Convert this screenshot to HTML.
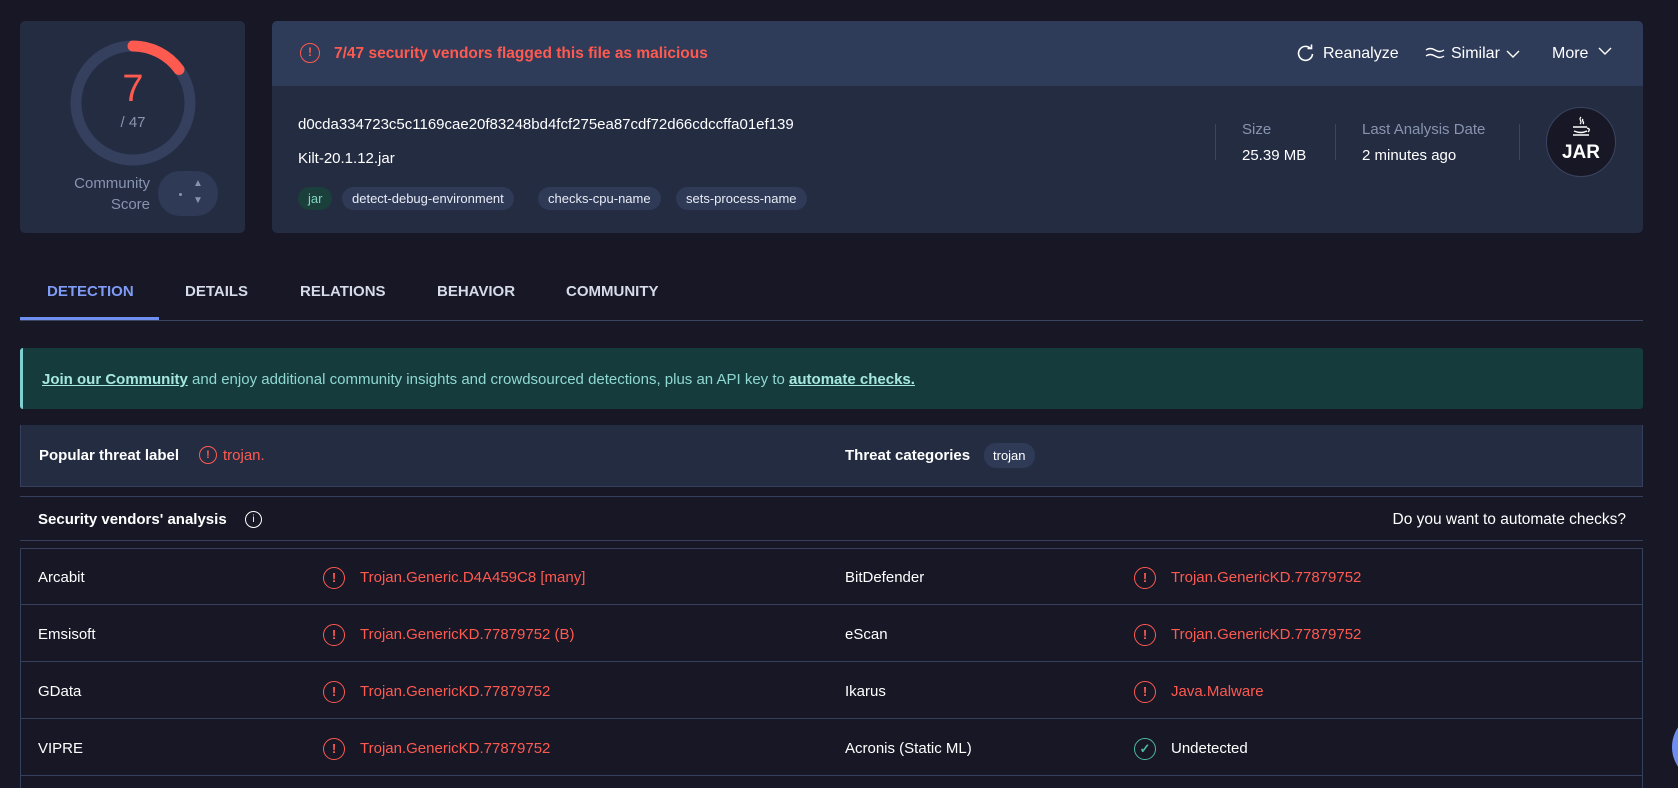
<!DOCTYPE html>
<html><head><meta charset="utf-8"><style>
*{box-sizing:border-box;margin:0;padding:0}
body{width:1678px;height:780px;overflow:hidden;background:#171726;font-family:"Liberation Sans",sans-serif;color:#fff;position:relative}
.abs{position:absolute}
.red{color:#ff5a50}
.muted{color:#8893b0}
.tag{position:absolute;top:187px;height:23px;line-height:23px;border-radius:12px;background:#2f3a57;font-size:13px;padding:0 10px;color:#e8ecf5}
.tab{position:absolute;top:283px;font-size:15px;font-weight:bold;color:#d5dbe8}
.row{position:absolute;left:20px;width:1623px;height:57px;border-bottom:1px solid #35405c}
.row span{position:absolute;top:1px;line-height:57px;font-size:15px}
.ic{position:absolute;top:19px;width:22px;height:22px;border:1.6px solid #ff5a50;border-radius:50%;color:#ff5a50;font-size:13px;text-align:center;line-height:19px;font-weight:bold}
</style></head><body>

<!-- score card -->
<div class="abs" style="left:20px;top:21px;width:225px;height:212px;background:#242c42;border-radius:5px"></div>
<svg class="abs" style="left:67px;top:37px" width="132" height="132" viewBox="0 0 132 132">
<circle cx="66" cy="66" r="57" fill="none" stroke="#34405e" stroke-width="11"/>
<path d="M66 9 A57 57 0 0 1 112 32.5" fill="none" stroke="#ff5a50" stroke-width="11" stroke-linecap="round"/>
</svg>
<div class="abs red" style="left:103px;top:68px;width:60px;text-align:center;font-size:38px">7</div>
<div class="abs muted" style="left:103px;top:114px;width:60px;text-align:center;font-size:15px">/ 47</div>
<div class="abs muted" style="left:40px;top:173px;width:110px;text-align:right;font-size:15px;line-height:21px">Community<br>Score</div>
<div class="abs" style="left:158px;top:171px;width:60px;height:45px;border-radius:22px;background:#2f3a57"></div>
<div class="abs" style="left:179px;top:193px;width:3px;height:3px;border-radius:50%;background:#8893b0"></div>
<div class="abs muted" style="left:193px;top:175px;font-size:10px;line-height:17px">▲<br>▼</div>

<!-- main panel -->
<div class="abs" style="left:272px;top:21px;width:1371px;height:212px;background:#242c42;border-radius:5px;overflow:hidden">
<div style="height:65px;background:#2e3b59"></div>
</div>
<div class="abs" style="left:300px;top:43px;width:20px;height:20px;border:1.6px solid #ff5a50;border-radius:50%;color:#ff5a50;font-size:12px;text-align:center;line-height:17px;font-weight:bold">!</div>
<div class="abs red" style="left:334px;top:45px;font-size:15.5px;font-weight:bold">7/47 security vendors flagged this file as malicious</div>

<svg class="abs" style="left:1297px;top:44px" width="18" height="18" viewBox="0 0 18 18"><path d="M14 5 A7 7 0 1 0 15.5 10" fill="none" stroke="#fff" stroke-width="1.6"/><path d="M10.5 4.5 L14.5 4.5 L14.5 0.5" fill="none" stroke="#fff" stroke-width="1.6"/></svg>
<div class="abs" style="left:1323px;top:45px;font-size:16px">Reanalyze</div>
<svg class="abs" style="left:1425px;top:46px" width="20" height="14" viewBox="0 0 20 14"><path d="M1 4 Q5 1 10 4 T19 4 M1 10 Q5 7 10 10 T19 10" fill="none" stroke="#fff" stroke-width="1.4"/></svg>
<div class="abs" style="left:1451px;top:45px;font-size:16px">Similar</div>
<svg class="abs" style="left:1506px;top:50px" width="14" height="9" viewBox="0 0 14 9"><path d="M1 1 L7 7 L13 1" fill="none" stroke="#fff" stroke-width="1.4"/></svg>
<div class="abs" style="left:1552px;top:45px;font-size:16px">More</div>
<svg class="abs" style="left:1598px;top:47px" width="14" height="9" viewBox="0 0 14 9"><path d="M1 1 L7 7 L13 1" fill="none" stroke="#fff" stroke-width="1.4"/></svg>

<div class="abs" style="left:298px;top:116px;font-size:15px">d0cda334723c5c1169cae20f83248bd4fcf275ea87cdf72d66cdccffa01ef139</div>
<div class="abs" style="left:298px;top:150px;font-size:15px">Kilt-20.1.12.jar</div>
<div class="tag" style="left:298px;background:#1b3f3a;color:#7fd4c4">jar</div>
<div class="tag" style="left:342px">detect-debug-environment</div>
<div class="tag" style="left:538px">checks-cpu-name</div>
<div class="tag" style="left:676px">sets-process-name</div>

<div class="abs" style="left:1215px;top:124px;width:1px;height:36px;background:#3a4560"></div>
<div class="abs muted" style="left:1242px;top:121px;font-size:15px">Size</div>
<div class="abs" style="left:1242px;top:147px;font-size:15px">25.39 MB</div>
<div class="abs" style="left:1335px;top:124px;width:1px;height:36px;background:#3a4560"></div>
<div class="abs muted" style="left:1362px;top:121px;font-size:15px">Last Analysis Date</div>
<div class="abs" style="left:1362px;top:147px;font-size:15px">2 minutes ago</div>
<div class="abs" style="left:1519px;top:124px;width:1px;height:36px;background:#3a4560"></div>
<div class="abs" style="left:1546px;top:107px;width:70px;height:70px;border-radius:50%;background:#171726;border:1px solid #3a4560"></div>
<svg class="abs" style="left:1568px;top:115px" width="26" height="26" viewBox="0 0 26 26"><path d="M13 2 C10 5 15 6 12 9 M15 4 C13 6 17 7 15 9" fill="none" stroke="#fff" stroke-width="1.3"/><path d="M5 12 H19 M6 16 Q13 19 19 16 M5 20 H21 M19 13 Q23 14 20 17" fill="none" stroke="#fff" stroke-width="1.4"/></svg>
<div class="abs" style="left:1546px;top:142px;width:70px;text-align:center;font-size:19px;font-weight:bold">JAR</div>

<!-- tabs -->
<div class="tab" style="left:47px;color:#7f9cf5">DETECTION</div>
<div class="tab" style="left:185px">DETAILS</div>
<div class="tab" style="left:300px">RELATIONS</div>
<div class="tab" style="left:437px">BEHAVIOR</div>
<div class="tab" style="left:566px">COMMUNITY</div>
<div class="abs" style="left:20px;top:320px;width:1623px;height:1px;background:#3a4560"></div>
<div class="abs" style="left:20px;top:317px;width:139px;height:3px;background:#6f8ff0"></div>

<!-- banner -->
<div class="abs" style="left:20px;top:348px;width:1623px;height:61px;background:#163b3d;border-left:3px solid #7fd0d0;border-radius:3px"></div>
<div class="abs" style="left:42px;top:371px;font-size:15px;color:#8fd8d0"><b style="text-decoration:underline;color:#a6e8e0">Join our Community</b> and enjoy additional community insights and crowdsourced detections, plus an API key to <b style="text-decoration:underline;color:#a6e8e0">automate checks.</b></div>

<!-- threat box -->
<div class="abs" style="left:20px;top:425px;width:1623px;height:62px;background:#242c42;border:1px solid #35405c;border-top:none"></div>
<div class="abs" style="left:39px;top:447px;font-size:15px;font-weight:bold">Popular threat label</div>
<div class="abs" style="left:199px;top:446px;width:18px;height:18px;border:1.5px solid #ff5a50;border-radius:50%;color:#ff5a50;font-size:11px;text-align:center;line-height:16px;font-weight:bold">!</div>
<div class="abs red" style="left:223px;top:447px;font-size:15px">trojan.</div>
<div class="abs" style="left:845px;top:447px;font-size:15px;font-weight:bold">Threat categories</div>
<div class="abs" style="left:984px;top:443px;height:25px;line-height:25px;padding:0 9px;border-radius:12px;background:#2f3a57;font-size:13px">trojan</div>

<!-- vendors header -->
<div class="abs" style="left:20px;top:496px;width:1623px;height:1px;background:#35405c"></div>
<div class="abs" style="left:38px;top:511px;font-size:15px;font-weight:bold">Security vendors' analysis</div>
<div class="abs" style="left:245px;top:511px;width:17px;height:17px;border:1.4px solid #fff;border-radius:50%;font-size:10px;text-align:center;line-height:15px">i</div>
<div class="abs" style="right:52px;top:511px;font-size:15.5px">Do you want to automate checks?</div>
<div class="abs" style="left:20px;top:540px;width:1623px;height:1px;background:#35405c"></div>

<!-- table -->
<div class="abs" style="left:20px;top:548px;width:1623px;height:240px;border:1px solid #35405c;border-bottom:none"></div>
<div class="row" style="top:548px"><span style="left:18px">Arcabit</span><div class="ic" style="left:303px">!</div><span class="red" style="left:340px">Trojan.Generic.D4A459C8 [many]</span><span style="left:825px">BitDefender</span><div class="ic" style="left:1114px">!</div><span class="red" style="left:1151px">Trojan.GenericKD.77879752</span></div>
<div class="row" style="top:605px"><span style="left:18px">Emsisoft</span><div class="ic" style="left:303px">!</div><span class="red" style="left:340px">Trojan.GenericKD.77879752 (B)</span><span style="left:825px">eScan</span><div class="ic" style="left:1114px">!</div><span class="red" style="left:1151px">Trojan.GenericKD.77879752</span></div>
<div class="row" style="top:662px"><span style="left:18px">GData</span><div class="ic" style="left:303px">!</div><span class="red" style="left:340px">Trojan.GenericKD.77879752</span><span style="left:825px">Ikarus</span><div class="ic" style="left:1114px">!</div><span class="red" style="left:1151px">Java.Malware</span></div>
<div class="row" style="top:719px"><span style="left:18px">VIPRE</span><div class="ic" style="left:303px">!</div><span class="red" style="left:340px">Trojan.GenericKD.77879752</span><span style="left:825px">Acronis (Static ML)</span><div class="ic" style="left:1114px;border-color:#4fb8a0;color:#4fb8a0">✓</div><span style="left:1151px">Undetected</span></div>

<div class="abs" style="left:1672px;top:712px;width:70px;height:70px;border-radius:50%;background:#6f8ff0"></div>
</body></html>
